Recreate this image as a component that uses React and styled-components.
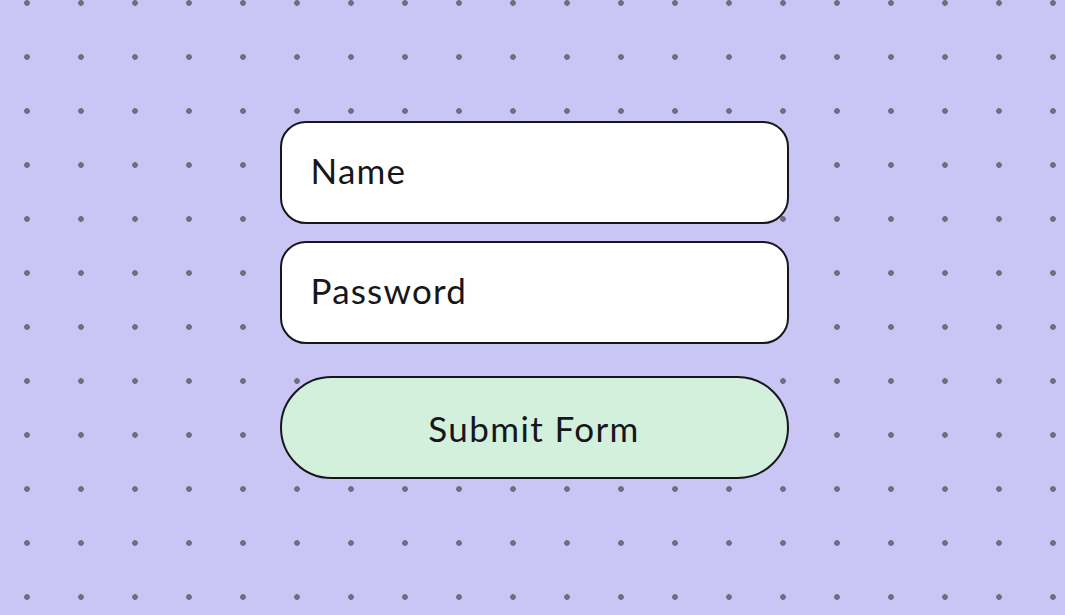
import React from "react";
import styled, { createGlobalStyle } from "styled-components";

const GlobalStyle = createGlobalStyle`
  html, body {
    margin: 0;
    padding: 0;
  }
  body {
    font-family: Lato, "Noto Sans", sans-serif;
  }
`;

const Page = styled.div`
  width: 100vw;
  height: 100vh;
  box-sizing: border-box;
  display: flex;
  justify-content: center;
  padding: 121px 0 0 3px;
  background-color: #c9c6f6;
  background-image: radial-gradient(
    circle,
    #6f6e7e 2.5px,
    rgba(111, 110, 126, 0) 3.2px
  );
  background-size: 54px 54px;
  background-position: 0 -24px;
  overflow: hidden;
`;

const Form = styled.form`
  width: 509px;
  display: flex;
  flex-direction: column;
`;

const Input = styled.input`
  box-sizing: border-box;
  height: 103px;
  margin-bottom: ${(p) => p.$gap || 0}px;
  padding: 0 29px 6px;
  border: 2.5px solid #17161b;
  border-radius: 26px;
  background: #ffffff;
  font-family: Lato, "Noto Sans", sans-serif;
  font-size: 35px;
  letter-spacing: 1.2px;
  color: #17161b;
  outline: none;

  &::placeholder {
    color: #17161b;
    opacity: 1;
  }
`;

const Button = styled.button`
  box-sizing: border-box;
  height: 103px;
  border: 2.5px solid #17161b;
  border-radius: 52px;
  background-color: #d3f0dc;
  font-family: Lato, "Noto Sans", sans-serif;
  font-size: 35px;
  letter-spacing: 1.4px;
  color: #17161b;
  cursor: pointer;
`;

const App = () => {
  return (
    <Page>
      <GlobalStyle />
      <Form onSubmit={(e) => e.preventDefault()}>
        <Input placeholder="Name" $gap={17} />
        <Input placeholder="Password" type="password" $gap={32} />
        <Button type="submit">Submit Form</Button>
      </Form>
    </Page>
  );
};

export default App;
